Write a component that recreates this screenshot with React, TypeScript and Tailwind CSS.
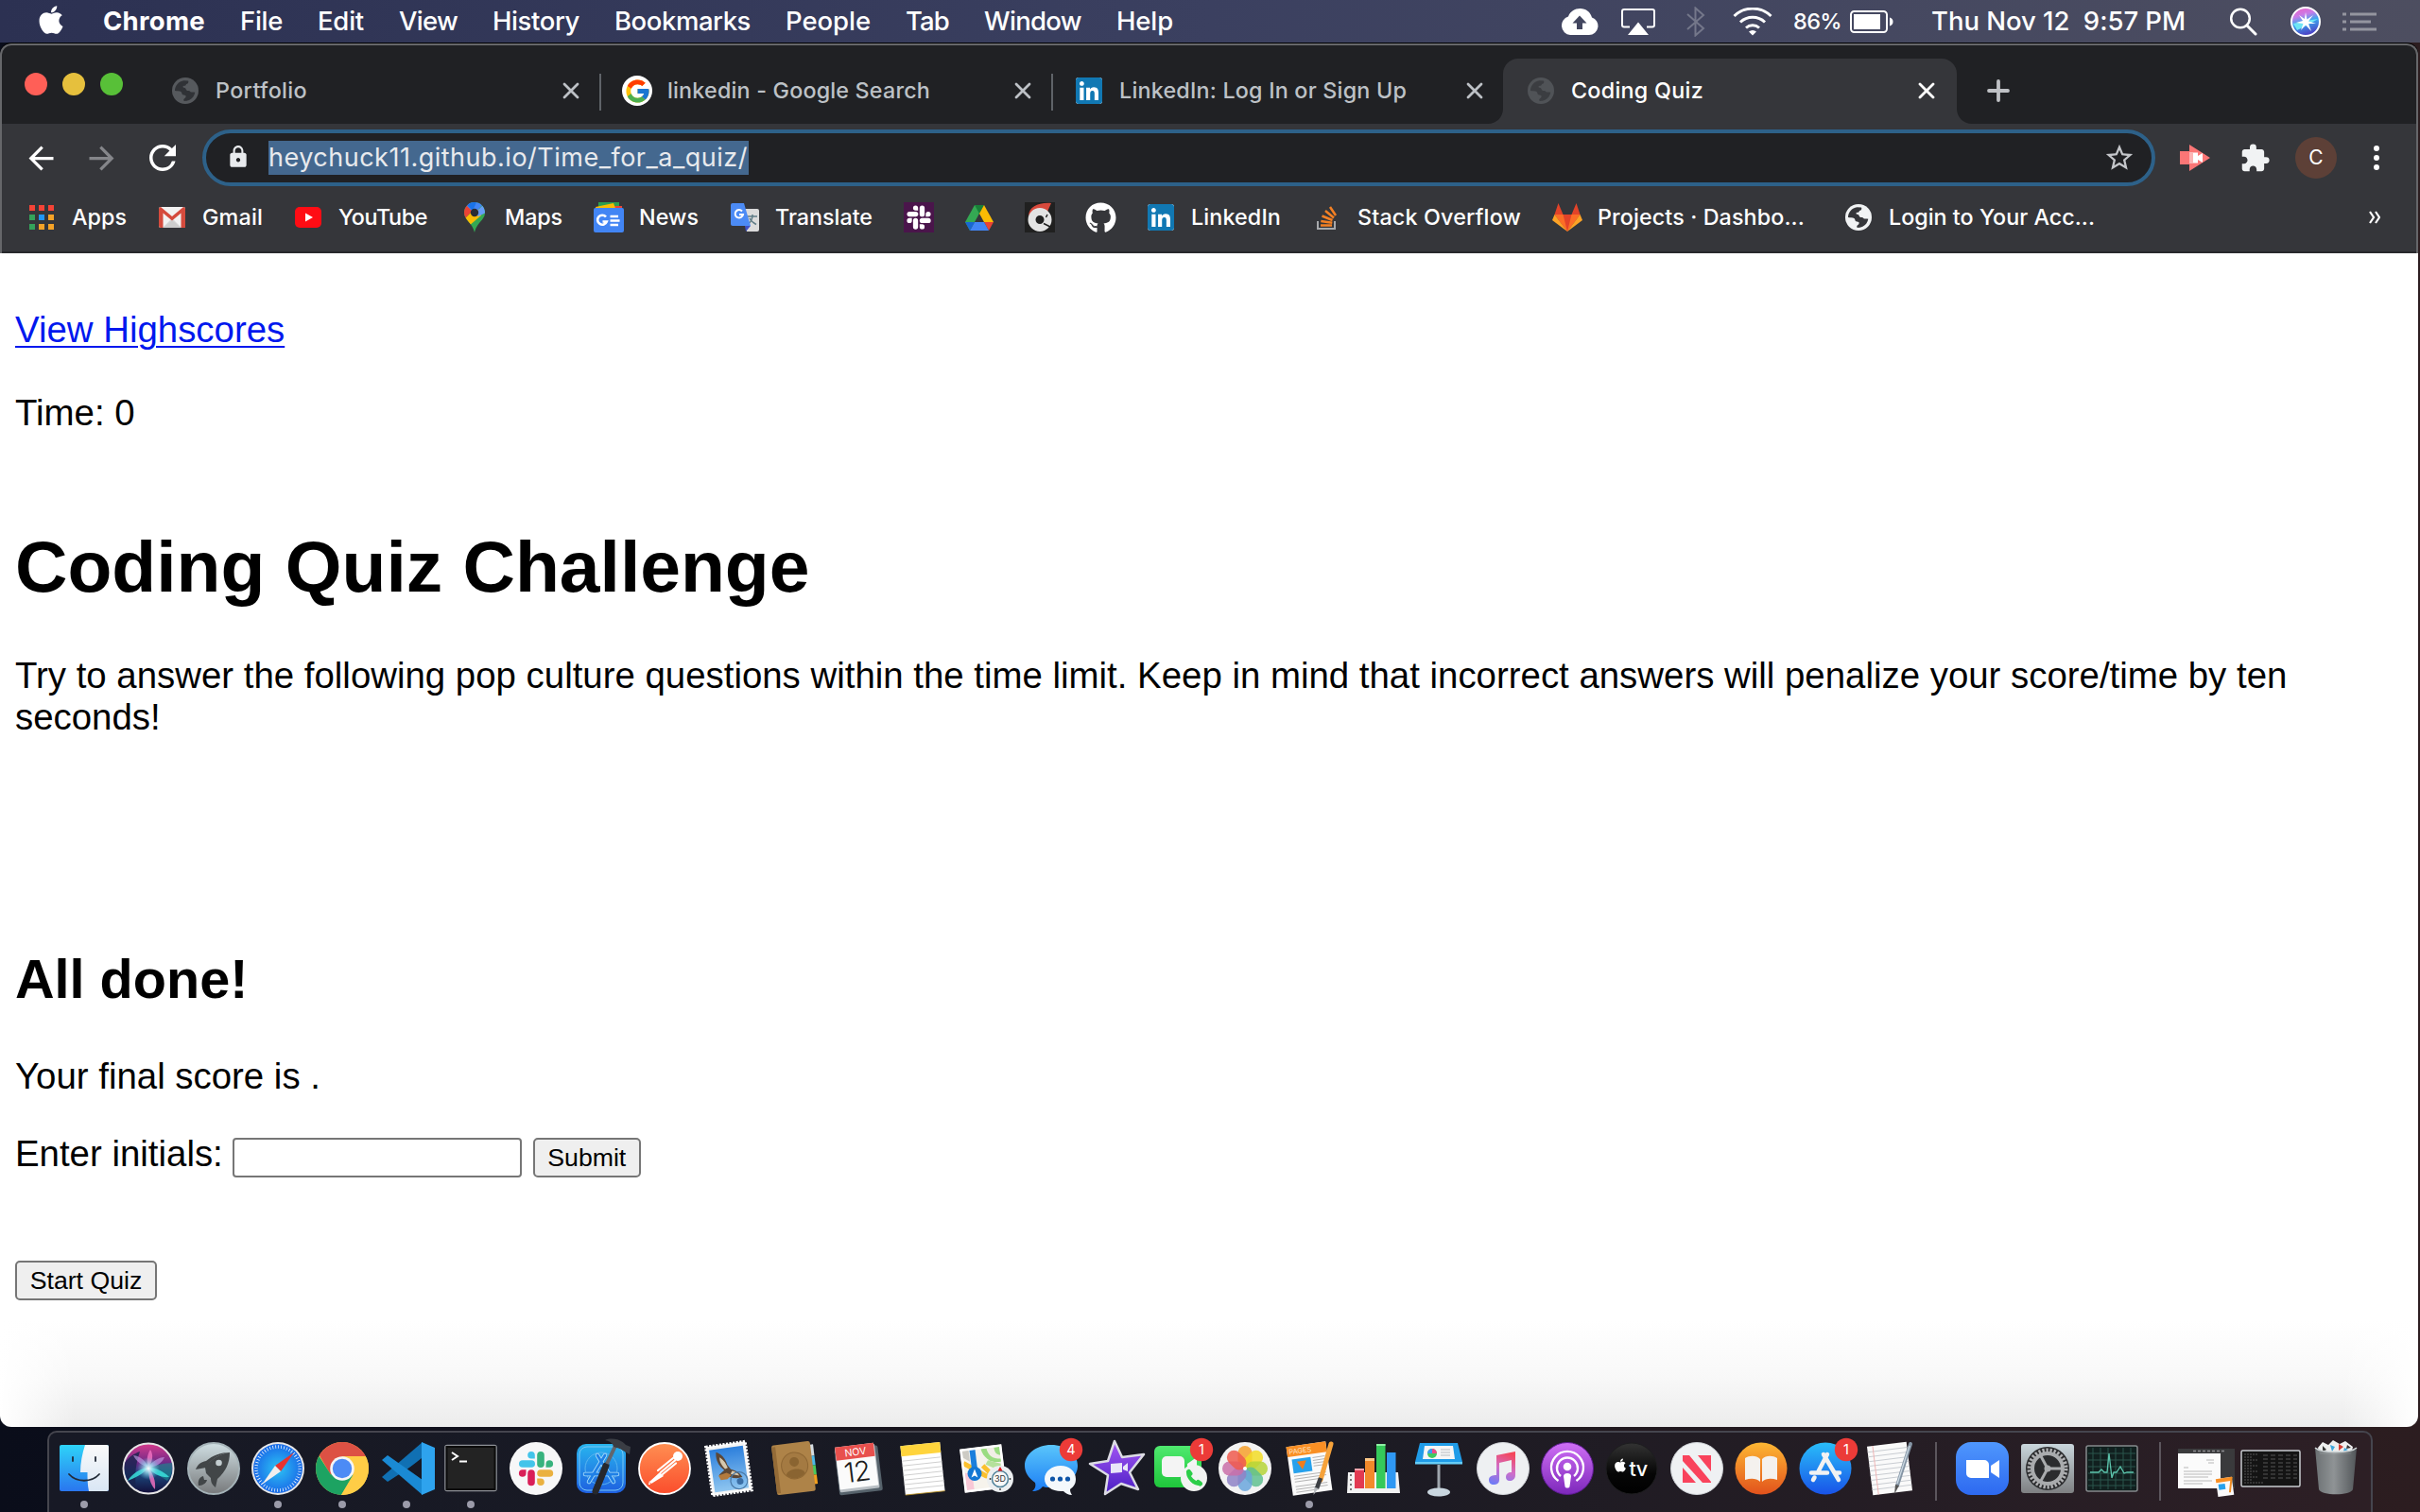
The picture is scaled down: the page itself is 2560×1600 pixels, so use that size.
import React, { useLayoutEffect, useRef, useState } from "react";
import { FaApple, FaGithub, FaLinkedin } from "react-icons/fa";
import { FcGoogle } from "react-icons/fc";
import { MdExtension, MdLock, MdStarBorder, MdArrowBack, MdArrowForward, MdRefresh } from "react-icons/md";

/** One line of text whose tracking is adjusted so that it fills `w` pixels. */
function Fit({ w, children, className = "" }: { w: number; children: string; className?: string }) {
  const ref = useRef<HTMLSpanElement>(null);
  const [ls, setLs] = useState(0);
  useLayoutEffect(() => {
    if (!ref.current) return;
    const natural = ref.current.getBoundingClientRect().width;
    setLs((w - natural) / children.length);
  }, [w, children]);
  return (
    <span ref={ref} className={`inline-block shrink-0 whitespace-pre ${className}`} style={{ letterSpacing: ls }}>
      {children}
    </span>
  );
}

function Globe({ className = "", fg, bg }: { className?: string; fg: string; bg: string }) {
  return (
    <svg viewBox="0 0 28 28" className={className}>
      <circle cx="14" cy="14" r="14" fill={fg} />
      <path
        fill={bg}
        d="M3 14c0-5.500 4-10 9.500-10.800L17 3.400c.6.900.4 2.400-.6 3-1 .5-1.600.6-1.800 1.600-.2 1.100-1.600.7-2.600 1-1 .4-.5 1.800.5 1.800 1.800 0 2 1 2.300 2 .4 1.100 1.500 1.400 2.700 1.300 1.700-.1 1.500 1.500 3 1.400 1.500 0 2.300-.3 3.800.3-.5 3.500-3 6.800-6.300 8.200-1.800.7-4.600 1.200-5.400.8-.7-.6-.3-2 .5-2.500 1-.5 1.600-1.300 1.500-2.500 0-1.300-2.100-.9-3.200-1.500-1.200-.7-.8-2.700-2-3.400C8 14.200 5 14.700 3 14z"
      />
    </svg>
  );
}

function SlackMark({ c1, c2, c3, c4 }: { c1: string; c2: string; c3: string; c4: string }) {
  return (
    <>
      <g fill={c1}>
        <rect x="-18" y="-8.800" width="17" height="7.600" rx="3.800" />
        <path d="M-1.200-10.500h-3.800a3.800 3.800 0 1 1 3.800-3.800z" />
      </g>
      <g fill={c2}>
        <rect x="1.200" y="-18" width="7.600" height="17" rx="3.800" />
        <path d="M10.500-1.200v-3.800a3.800 3.800 0 1 1 3.800 3.800z" />
      </g>
      <g fill={c3}>
        <rect x="1.200" y="1.200" width="17" height="7.600" rx="3.800" />
        <path d="M1.200 10.500h3.800a3.800 3.800 0 1 1-3.800 3.800z" />
      </g>
      <g fill={c4}>
        <rect x="-8.800" y="1.200" width="7.600" height="17" rx="3.800" />
        <path d="M-10.500 1.200v3.800a3.800 3.800 0 1 1-3.800-3.800z" />
      </g>
    </>
  );
}

/* ---------- menu bar ---------- */

const menus: [string, number][] = [
  ["File", 45],
  ["Edit", 49],
  ["View", 62],
  ["History", 92],
  ["Bookmarks", 144],
  ["People", 90],
  ["Tab", 46],
  ["Window", 103],
  ["Help", 60],
];

function MenuBar() {
  return (
    <div className="flex h-[45px] shrink-0 items-center bg-linear-to-r from-[#2c3152] via-[#3b4060] to-[#4d4e60] text-[27.500px] leading-none font-medium text-white">
      <FaApple className="ml-[37px] mb-1 size-[34px] shrink-0" />
      <div className="ml-[38px] flex gap-[37px]">
        <Fit w={108} className="font-bold">Chrome</Fit>
        {menus.map(([m, w]) => (
          <div key={m} className="flex shrink-0">
            <Fit w={w}>{m}</Fit>
          </div>
        ))}
      </div>
      <div className="ml-auto flex items-center">
        <svg viewBox="0 0 40 28" className="h-[28px] w-[40px]">
          <path fill="#fff" d="M10 28a10 10 0 0 1-2-19.500C10 3 15 0 20.500 0c6.500 0 11 4 12.500 9.500A9.500 9.500 0 0 1 30 28z" />
          <path fill="#42465f" d="M20 7.500l7.500 8h-4.500v6.500h-6v-6.500h-4.500z" />
        </svg>
        <svg viewBox="0 0 36 28" className="ml-6 h-[28px] w-[36px]">
          <path fill="none" stroke="#fff" strokeWidth="2" d="M9 19.500H3a2 2 0 0 1-2-2V3a2 2 0 0 1 2-2h30a2 2 0 0 1 2 2v14.500a2 2 0 0 1-2 2h-6" />
          <path fill="#fff" d="M18 14.500L29 28H7z" />
        </svg>
        <svg viewBox="0 0 20 32" className="ml-[33px] h-[32px] w-[20px]">
          <path fill="none" stroke="#74778a" strokeWidth="2" d="M1 8l17 15-8.500 7.500V1.500L18 9 1 24" />
        </svg>
        <svg viewBox="0 0 42 30" className="ml-[29px] h-[30px] w-[42px]">
          <g fill="none" stroke="#fff" strokeWidth="3">
            <path d="M1.500 9a28 28 0 0 1 39 0" />
            <path d="M8 15.500a19 19 0 0 1 26 0" />
            <path d="M14 21.500a10.500 10.500 0 0 1 14 0" />
          </g>
          <path fill="#fff" d="M17 25.500a6 6 0 0 1 8 0l-4 4z" />
        </svg>
        <div className="ml-[22px] w-[60px] text-[23.500px]">
          <Fit w={51}>86%</Fit>
        </div>
        <svg viewBox="0 0 46 24" className="h-[24px] w-[46px]">
          <rect x="1" y="1" width="38" height="22" rx="3.500" fill="none" stroke="#fff" strokeWidth="2" />
          <rect x="4" y="4" width="28" height="16" fill="#fff" />
          <path fill="#fff" d="M42 7.500c2.500.5 3.500 2.500 3.500 4.500s-1 4-3.500 4.500z" />
        </svg>
        <div className="ml-[40px] w-[270px]">
          <Fit w={269}>Thu Nov 12  9:57 PM</Fit>
        </div>
        <svg viewBox="0 0 30 30" className="ml-[45px] h-[30px] w-[30px]">
          <circle cx="12" cy="11.500" r="9.800" fill="none" stroke="#fff" strokeWidth="2.500" />
          <path stroke="#fff" strokeWidth="3" strokeLinecap="round" d="M19 19l9 9" />
        </svg>
        <svg viewBox="-17 -17 34 34" className="ml-[34px] h-[34px] w-[34px]">
          <defs>
            <linearGradient id="siriMini" x1="0" y1="0" x2="0.300" y2="1">
              <stop offset="0" stopColor="#f65cc0" />
              <stop offset=".35" stopColor="#c77be8" />
              <stop offset=".6" stopColor="#3aa7ee" />
              <stop offset="1" stopColor="#4b48c8" />
            </linearGradient>
          </defs>
          <circle r="15" fill="url(#siriMini)" stroke="#fff" strokeWidth="2" />
          <path fill="#6fe6f5" d="M0-1L13-3 3 3-9 9-13 2z" />
          <path fill="#fff" d="M0-10l1.500 7.500L8-7 3-.5 11 2 3 2 6 10 0 3.500-5 9-2.500 2-10 1-3-1-7-7-1.200-3z" />
        </svg>
        <svg viewBox="0 0 36 20" className="mr-[46px] ml-[22px] h-[20px] w-[36px]">
          <path stroke="#94959f" strokeWidth="3" d="M0 2h4M8 2h28M0 10h4M8 10h22M0 18h4M8 18h28" />
        </svg>
      </div>
    </div>
  );
}

/* ---------- browser chrome ---------- */

function CloseX({ color }: { color: string }) {
  return (
    <svg viewBox="0 0 18 18" className="size-[18px] shrink-0">
      <path stroke={color} strokeWidth="2.800" strokeLinecap="round" d="M2 2l14 14M16 2L2 16" />
    </svg>
  );
}

function LinkedInIcon() {
  return (
    <div className="flex size-7 items-center justify-center overflow-hidden rounded-[3px] bg-white">
      <FaLinkedin className="size-[32px] shrink-0 text-[#1178b3]" />
    </div>
  );
}

function TabStrip() {
  return (
    <div className="flex h-[83px] shrink-0 text-[23.300px] font-[450] text-[#bdc1c6]">
      <div className="flex w-[170px] shrink-0 gap-4 pt-[29px] pl-[24px]">
        <div className="size-6 rounded-full bg-[#ff5f57]" />
        <div className="size-6 rounded-full bg-[#e6c03d]" />
        <div className="size-6 rounded-full bg-[#58c038]" />
      </div>
      <div className="mt-[14px] flex h-[68px] w-[462px] shrink-0 items-center pl-[10px]">
        <Globe className="size-7" fg="#56595d" bg="#303236" />
        <div className="ml-[18px] w-[367px]">
          <Fit w={97}>Portfolio</Fit>
        </div>
        <CloseX color="#bdc1c6" />
      </div>
      <div className="mt-[30px] h-[39px] w-[2px] shrink-0 bg-[#5f6368]" />
      <div className="mt-[14px] flex h-[68px] w-[476px] shrink-0 items-center pl-[22px]">
        <div className="flex size-8 items-center justify-center rounded-full bg-white">
          <FcGoogle className="size-[29px]" />
        </div>
        <div className="ml-[16px] w-[367px]">
          <Fit w={278}>linkedin - Google Search</Fit>
        </div>
        <CloseX color="#bdc1c6" />
      </div>
      <div className="mt-[30px] h-[39px] w-[2px] shrink-0 bg-[#5f6368]" />
      <div className="mt-[14px] flex h-[68px] w-[460px] shrink-0 items-center pl-[24px]">
        <LinkedInIcon />
        <div className="ml-[18px] w-[367px]">
          <Fit w={304}>LinkedIn: Log In or Sign Up</Fit>
        </div>
        <CloseX color="#bdc1c6" />
      </div>
      <div className="mt-[14px] flex shrink-0 text-white">
        <svg viewBox="0 0 16 16" className="size-4 self-end">
          <path fill="#35363a" d="M16 0v16H0C9 16 16 9 16 0z" />
        </svg>
        <div className="flex h-[69px] w-[480px] items-center rounded-t-[16px] bg-[#35363a] pb-px pl-[26px]">
          <Globe className="size-7" fg="#505357" bg="#3b3d41" />
          <div className="ml-[18px] w-[367px]">
            <Fit w={140}>Coding Quiz</Fit>
          </div>
          <CloseX color="#ffffff" />
        </div>
        <svg viewBox="0 0 16 16" className="size-4 self-end">
          <path fill="#35363a" d="M0 0v16h16C7 16 0 9 0 0z" />
        </svg>
      </div>
      <svg viewBox="0 0 24 24" className="mt-[36px] ml-[16px] size-6">
        <path stroke="#bfc1c5" strokeWidth="3.800" strokeLinecap="round" d="M12 2v20M2 12h20" />
      </svg>
    </div>
  );
}

function Toolbar() {
  return (
    <div className="flex h-[72px] shrink-0 items-center bg-[#35363a]">
      <MdArrowBack className="ml-[22px] size-[39px] shrink-0 text-white" />
      <MdArrowForward className="ml-[25px] size-[39px] shrink-0 text-[#85868a]" />
      <MdRefresh className="ml-[24px] size-[42px] shrink-0 text-white" />
      <div className="ml-[21px] flex h-[60px] w-[2066px] shrink-0 items-center rounded-full border-4 border-[#2d6189] bg-[#202124]">
        <MdLock className="ml-[21px] mb-[2px] size-[26px] shrink-0 text-[#e8eaed]" />
        <div className="ml-[19px] h-[36px] w-[508px] bg-[#44688f] text-[27px] leading-[35px] text-[#e8eaed]">
          <Fit w={507}>heychuck11.github.io/Time_for_a_quiz/</Fit>
        </div>
        <MdStarBorder className="mr-[17px] ml-auto size-[34px] text-[#c4c6ca]" />
      </div>
      <svg viewBox="0 0 32 28" className="ml-[26px] h-[28px] w-[32px] shrink-0">
        <path fill="#fb7676" d="M0 7h10V0l22 14-22 14v-7H0z" />
        <path fill="#fff" d="M10 8.500h9v3.500l5-3v10l-5-3v3.500h-9z" />
        <path fill="#fcb5b5" d="M10 8.500h4v11h-4z" />
      </svg>
      <MdExtension className="ml-[31px] size-[33px] shrink-0 text-[#f1f3f4]" />
      <div className="ml-[26px] flex size-11 shrink-0 items-center justify-center rounded-full bg-[#5d4037] text-[21px] text-white">C</div>
      <svg viewBox="0 0 6 26" className="ml-[39px] h-[26px] w-[6px] shrink-0">
        <circle cx="3" cy="3" r="3" fill="#fff" />
        <circle cx="3" cy="13" r="3" fill="#fff" />
        <circle cx="3" cy="23" r="3" fill="#fff" />
      </svg>
    </div>
  );
}

function Bookmark({ slot, icon, label, w = 0 }: { slot: string; icon: React.ReactNode; label?: string; w?: number }) {
  return (
    <div className={`flex shrink-0 items-center ${slot}`}>
      <div className="flex w-8 shrink-0 items-center justify-center">{icon}</div>
      {label && (
        <div className="ml-4 flex">
          <Fit w={w}>{label}</Fit>
        </div>
      )}
    </div>
  );
}

function BookmarksBar() {
  const dots = ["#f44336", "#f44336", "#f44336", "#34a35a", "#2196f3", "#f5a327", "#34a35a", "#f5a327", "#f5a327"];
  return (
    <div className="flex h-[65px] shrink-0 items-center border-b-2 border-[#28292c] bg-[#35363a] pb-[9px] pl-[26px] text-[23.300px] font-[450] text-white">
      <Bookmark
        slot="w-[138px]"
        label="Apps"
        w={58}
        icon={
          <div className="grid grid-cols-3 gap-1">
            {dots.map((c, i) => (
              <div key={i} className="size-[6px]" style={{ backgroundColor: c }} />
            ))}
          </div>
        }
      />
      <Bookmark
        slot="w-[144px]"
        label="Gmail"
        w={64}
        icon={
          <svg viewBox="0 0 28 22" className="h-[22px] w-7">
            <rect width="28" height="22" rx="2" fill="#f2f2f2" />
            <path fill="#d5d5d5" d="M4 22L14 12l10 10z" />
            <path fill="#c5c5c5" d="M4.500 22L14 14.500 23.500 22z" opacity=".5" />
            <path fill="#d54b3d" d="M0 2C0 1 1 0 2 0l12 10L26 0c1 0 2 1 2 2v20h-4.500V6.500L14 14.500 4.500 6.500V22H2a2 2 0 0 1-2-2z" />
          </svg>
        }
      />
      <Bookmark
        slot="w-[176px]"
        label="YouTube"
        w={94}
        icon={
          <svg viewBox="0 0 28 22" className="h-[22px] w-7">
            <rect width="28" height="22" rx="5" fill="#ff0c14" />
            <path fill="#fff" d="M11 6.500l8 4.500-8 4.500z" />
          </svg>
        }
      />
      <Bookmark
        slot="w-[142px]"
        label="Maps"
        w={61}
        icon={
          <svg viewBox="0 0 22 32" className="h-8 w-[22px]">
            <clipPath id="pin">
              <path d="M11 0a11 11 0 0 1 11 11c0 8-8.500 10-11 21C8.500 21 0 19 0 11A11 11 0 0 1 11 0z" />
            </clipPath>
            <g clipPath="url(#pin)">
              <rect width="22" height="32" fill="#34a853" />
              <path fill="#fbbc04" d="M0 18L14 4l4 10L5 25z" />
              <path fill="#ea4335" d="M0 0v18L12 6 4 0z" />
              <path fill="#4285f4" d="M3 4l8 8L22 0H6z" />
              <path fill="#669df6" d="M11 12l9-9 3 8-8 4z" />
              <path fill="#1a73e8" d="M3 3l6 6 4-9H6z" />
            </g>
            <circle cx="11" cy="11" r="4.200" fill="#2b2d33" />
          </svg>
        }
      />
      <Bookmark
        slot="w-[144px]"
        label="News"
        w={63}
        icon={
          <svg viewBox="0 0 32 32" className="size-8">
            <path fill="#2e9e4f" d="M5 0h22v8H5z" />
            <path fill="#ea4335" d="M14 4h16v6H14z" />
            <path fill="#fbbc04" d="M2 5l19-4 3 8H3z" />
            <rect y="6" width="32" height="26" rx="2" fill="#4285f4" />
            <path fill="none" stroke="#fff" strokeWidth="2.600" d="M13 15.500a5 5 0 1 0 .8 5H9.500M17.500 15h8.500M17.500 19.500h10M17.500 24h8.500" />
          </svg>
        }
      />
      <Bookmark
        slot="w-[184px]"
        label="Translate"
        w={103}
        icon={
          <svg viewBox="0 0 30 30" className="size-[30px]">
            <path fill="#dcdcdc" d="M12 6h16a2 2 0 0 1 2 2v20a2 2 0 0 1-2 2H17z" />
            <path fill="none" stroke="#5f7c86" strokeWidth="1.500" d="M18 14h10M23 12v2c-.5 4-2 6-4.500 8M20 16c1.500 3 4 5 7 6.500" />
            <path fill="#3f51c5" d="M15 24h6l-5 6z" />
            <path fill="#4c8bf5" d="M2 0h12l7 24H2a2 2 0 0 1-2-2V2a2 2 0 0 1 2-2z" />
            <path fill="none" stroke="#fff" strokeWidth="2" d="M12 8.500a4.200 4.200 0 1 0 1 3.500H9" />
          </svg>
        }
      />
      <Bookmark
        slot="w-[64px]"
        icon={
          <svg viewBox="-23 -23 46 46" className="size-8">
            <rect x="-23" y="-23" width="46" height="46" fill="#4a154b" />
            <SlackMark c1="#fff" c2="#fff" c3="#fff" c4="#fff" />
          </svg>
        }
      />
      <Bookmark
        slot="w-[64px]"
        icon={
          <svg viewBox="0 0 30 27" className="h-[27px] w-[30px]">
            <path fill="#34a853" d="M10 0h2l3.500 8L5 27 0 18z" />
            <path fill="#188038" d="M10 0h10l-5 9z" />
            <path fill="#fbbc04" d="M20 0l10 18H20L15 9z" />
            <path fill="#ea4335" d="M20 18h10l-5 9z" />
            <path fill="#4285f4" d="M10 18h10l5 9H5z" />
            <path fill="#1967d2" d="M0 18h10l-5 9z" />
          </svg>
        }
      />
      <Bookmark
        slot="w-[64px]"
        icon={
          <svg viewBox="0 0 32 32" className="size-8">
            <rect width="32" height="32" fill="#202020" />
            <path fill="#d8493c" d="M4 14C5 5 14 0 28 1l-4 9C16 6 9 9 4 14z" />
            <circle cx="16" cy="18.500" r="8.500" fill="none" stroke="#e3e3e3" strokeWidth="8" />
            <path stroke="#202020" strokeWidth="1.500" d="M20 22.500l8 4M24 13l-1.500 3" />
          </svg>
        }
      />
      <Bookmark slot="w-[64px]" icon={<FaGithub className="size-[33px] shrink-0 text-white" />} />
      <Bookmark slot="w-[176px]" label="LinkedIn" w={95} icon={<LinkedInIcon />} />
      <Bookmark
        slot="w-[254px]"
        label="Stack Overflow"
        w={173}
        icon={
          <svg viewBox="0 0 24 28" className="h-[28px] w-6">
            <path fill="none" stroke="#a7a9ac" strokeWidth="2" d="M2 18v8h18v-8" />
            <g stroke="#f48024" strokeWidth="2.500">
              <path d="M5 22.500h12M5.300 18l12 1.800M6.500 12.500l11 4.500M10 7l9 7.500M15 3l6 9" />
            </g>
          </svg>
        }
      />
      <Bookmark
        slot="w-[308px]"
        label="Projects · Dashbo..."
        w={219}
        icon={
          <svg viewBox="0 0 32 30" className="h-[30px] w-8">
            <path fill="#e24329" d="M6.500 0l5 12h9l5-12L29.500 12 16 30 2.500 12z" />
            <path fill="#fc6d26" d="M2.500 12h9L16 30zM29.500 12h-9L16 30z" />
            <path fill="#fca326" d="M2.500 12L0 18l16 12zM29.500 12L32 18 16 30z" />
          </svg>
        }
      />
      <Bookmark slot="w-[400px]" label="Login to Your Acc..." w={218} icon={<Globe className="size-7" fg="#f1f3f4" bg="#35363a" />} />
      <svg viewBox="0 0 12 14" className="mr-[38px] ml-auto h-[14px] w-3">
        <path fill="none" stroke="#fff" strokeWidth="2.200" d="M1 1l4 6-4 6M7 1l4 6-4 6" />
      </svg>
    </div>
  );
}

/* ---------- page ---------- */

function QuizPage() {
  return (
    <main className="flex h-[1242px] flex-col overflow-hidden rounded-b-[12px] bg-[linear-gradient(to_right,#fff,rgba(255,255,255,0)_80px,rgba(255,255,255,0)_calc(100%-80px),#fff),linear-gradient(to_bottom,#fff_1130px,#f8f8f8_1190px,#ececec)] px-4 pt-[59px] font-['Liberation_Sans',Arial,sans-serif] text-[38.400px] leading-[44px] text-black">
      <a className="self-start text-[#0018ee] underline decoration-2 underline-offset-[4px]">View Highscores</a>
      <p className="mt-[44px]">Time: 0</p>
      <h1 className="mt-[96px] text-[76.800px] leading-[88px] font-bold">Coding Quiz Challenge</h1>
      <p className="mt-[50px]">
        Try to answer the following pop culture questions within the time limit. Keep in mind that incorrect answers will
        penalize your score/time by ten seconds!
      </p>
      <h2 className="mt-[222px] text-[57.600px] leading-[66px] font-bold">All done!</h2>
      <p className="mt-[48px]">Your final score is .</p>
      <div className="mt-[38px] flex items-start">
        <label>Enter initials:</label>
        <input className="mt-[5px] ml-[10px] h-[42px] w-[306px] rounded-[4px] border-2 border-[#767676] bg-white" />
        <button className="mt-[5px] ml-3 h-[42px] w-[114px] rounded-[5px] border-2 border-[#767676] bg-[#efefef] text-[26.670px] leading-[38px]">
          Submit
        </button>
      </div>
      <button className="mt-[88px] h-[42px] w-[150px] self-start rounded-[5px] border-2 border-[#767676] bg-[#efefef] text-[26.670px] leading-[38px] whitespace-nowrap">
        Start Quiz
      </button>
    </main>
  );
}

/* ---------- dock icons: drawn around the centre of a 68 × 68 cell ---------- */

const Finder = () => (
  <>
    <defs>
      <linearGradient id="fnA" x1="0" y1="0" x2="0" y2="1"><stop offset="0" stopColor="#2ed3f8" /><stop offset="1" stopColor="#2a76ef" /></linearGradient>
      <linearGradient id="fnB" x1="0" y1="0" x2="0" y2="1"><stop offset="0" stopColor="#fafafa" /><stop offset="1" stopColor="#d9e6f5" /></linearGradient>
    </defs>
    <rect x="-26" y="-25" width="52" height="49" rx="2" fill="url(#fnA)" />
    <path fill="url(#fnB)" d="M1-25h23a2 2 0 0 1 2 2v45a2 2 0 0 1-2 2H5C3.500 17 3.500 10 3.500 4H-4C-4-6-2-16 1-25z" />
    <path fill="none" stroke="#222b38" strokeWidth="1.800" strokeLinecap="round" d="M-12-12v4M12-12v4M-16 6c8 9 24 9 32 0" />
  </>
);

const Siri = () => (
  <>
    <defs>
      <linearGradient id="siA" x1="0" y1="0" x2="0" y2="1"><stop offset="0" stopColor="#d83a8c" /><stop offset=".4" stopColor="#6a2a88" /><stop offset=".6" stopColor="#1c4a80" /><stop offset="1" stopColor="#130c38" /></linearGradient>
      <radialGradient id="siB"><stop offset="0" stopColor="#fff" /><stop offset=".35" stopColor="#a8e8f4" stopOpacity=".8" /><stop offset="1" stopColor="#60c0e0" stopOpacity="0" /></radialGradient>
    </defs>
    <circle r="26.500" fill="url(#siA)" stroke="#e6e6e6" strokeWidth="2" />
    <path fill="#18234e" opacity=".8" d="M-25-6c4-6 10-10 16-12-4 12-6 24-4 40-8-6-14-16-12-28z" />
    <path fill="#1c8a8e" opacity=".6" d="M25-6c-8 0-18 3-25 5 7 6 14 10 20 14 4-5 6-12 5-19z" />
    <path fill="#3ae0dc" opacity=".85" d="M0-1C-6 6-14 10-22 13c6-9 14-13 22-14zM0-1C8-1 16 3 22 9 14 10 5 6 0-1z" />
    <path fill="#f070c0" opacity=".85" d="M0-1c5 7 8 14 7 23C2 17 0 8 0-1zM0-1C-2-8-2-13 2-20c4 6 2 13-2 19z" />
    <path fill="#c9a6ee" opacity=".6" d="M0-1c-8-3-13-7-16-13C-8-13-3-8 0-1zM0-1C4-8 11-12 17-12 14-5 8-2 0-1z" />
    <circle r="12" fill="url(#siB)" />
  </>
);

const Launchpad = () => (
  <>
    <defs><linearGradient id="lpA" x1="0" y1="0" x2="0" y2="1"><stop offset="0" stopColor="#d0dfe3" /><stop offset="1" stopColor="#77797b" /></linearGradient></defs>
    <circle r="27" fill="url(#lpA)" stroke="#a5b3b8" strokeWidth="2" />
    <g fill="#424648">
      <path d="M17-17C7-16-3-10-8-1l-11 2c2-5 5-8 11-9C-1-14 8-17 17-17z" />
      <path d="M17-17C17-6 13 3 4 11L2 20c-4-3-5-6-5-10l-5-5-1-6C-3-10 7-16 17-17z" />
      <path d="M-11 8c-4 1-6 5-5 10 4 0 8-2 9-6l-3 0z" />
    </g>
    <circle cx="5.500" cy="-6" r="3.300" fill="#c3cdd0" />
  </>
);

const Safari = () => (
  <>
    <defs><radialGradient id="sfA"><stop offset="0" stopColor="#2cc3f4" /><stop offset="1" stopColor="#1a6be8" /></radialGradient></defs>
    <circle r="28" fill="#e7e7e7" />
    <circle r="26" fill="url(#sfA)" />
    <circle r="23" fill="none" stroke="#fff" strokeWidth="3.500" strokeDasharray=".7 2.300" />
    <path fill="#e8332f" d="M17-17L-3-3l6 6z" />
    <path fill="#f1efee" d="M-17 17L-3-3l6 6z" />
  </>
);

const Chrome = () => (
  <>
    <circle r="28" fill="#ffcd46" />
    <path fill="#dd5144" d="M-24.200-14A28 28 0 0 1 24.800-13H0L-12 7z" />
    <path fill="#1da362" d="M-24.600-13.300A28 28 0 0 0-1 28L12 7 0 0-12 6.500z" />
    <path fill="#ffcd46" d="M24.800-13A28 28 0 0 1-1 28L11.500 6.500 9-13z" />
    <circle r="12.800" fill="#f5f5f5" />
    <circle r="10.200" fill="#4c8bf5" />
  </>
);

const VSCode = () => (
  <g transform="translate(2 0)">
    <path fill="#1070b3" d="M-28 9l6 5L15-10V-28L-28 9z" />
    <path fill="#1a8ad4" d="M-28-9l6-5L15 12v16L-28-9z" />
    <path fill="#2ea3ee" d="M14-28l14 6v44l-14 6z" />
    <path fill="#171824" d="M14-11v22L0 0z" />
  </g>
);

const Terminal = () => (
  <>
    <rect x="-27" y="-24.500" width="54" height="48" rx="2" fill="#232323" stroke="#8d9096" strokeWidth="1.600" />
    <rect x="-25.500" y="-23" width="51" height="45" fill="none" stroke="#0c0c0c" strokeWidth="2" />
    <path fill="none" stroke="#fff" strokeWidth="2" d="M-20-17l6 4-6 4M-12-7.500h8" />
  </>
);

const Slack = () => (
  <>
    <circle r="28" fill="#f7f7f8" />
    <SlackMark c1="#43c4ea" c2="#38b37e" c3="#eab140" c4="#d91f58" />
  </>
);

const Xcode = () => (
  <>
    <defs><linearGradient id="xcA" x1="0" y1="0" x2="0" y2="1"><stop offset="0" stopColor="#28b5ee" /><stop offset="1" stopColor="#1e5fe0" /></linearGradient></defs>
    <g transform="translate(1 0)">
      <rect x="-26" y="-26" width="52" height="52" rx="10" fill="url(#xcA)" />
      <rect x="-23" y="-23" width="46" height="46" rx="8" fill="none" stroke="#78c8f5" strokeWidth="1" />
      <circle r="17" fill="none" stroke="#5ab4f0" strokeWidth="1" />
      <path fill="none" stroke="#a8dcfa" strokeWidth="4.500" strokeLinecap="round" d="M-13 14L4-14M13 14L-4-14M-17 6h34" />
      <path fill="none" stroke="#1f80e6" strokeWidth="2.800" strokeLinecap="round" d="M-13 14L4-14M13 14L-4-14M-17 6h34" />
      <path stroke="#26282d" strokeWidth="7" strokeLinecap="round" d="M-6 24L5-3" />
      <path stroke="#63666d" strokeWidth="4" d="M6-5l9-19" />
      <path fill="#3a3d44" d="M4-30c7-3 17-1 22 5l5 2-1 8-7-4c-4-3-7-3-10-4-1-4-4-6-9-7z" />
    </g>
  </>
);

const Postman = () => (
  <>
    <defs><linearGradient id="pmA" x1="0" y1="0" x2="0" y2="1"><stop offset="0" stopColor="#ff8f52" /><stop offset="1" stopColor="#fb4d2c" /></linearGradient></defs>
    <circle r="27" fill="url(#pmA)" stroke="#fff" strokeWidth="1.800" />
    <circle cx="14" cy="-13" r="5" fill="#fff" />
    <path stroke="#fff" strokeWidth="2.200" strokeLinecap="round" d="M9-11L-7 2M11-8.500L-4 4M12-5.500L-2 6" />
    <path fill="#fff" d="M-5 4l-11 10 2 2L-1 8zM-16 13l1 4-2 0z" />
  </>
);

const Mail = () => (
  <g transform="rotate(-8)">
    <rect x="-21" y="-26" width="42" height="52" fill="#f4f4f4" stroke="#fff" strokeWidth="3" strokeDasharray="2.200 1.400" />
    <defs><linearGradient id="mlA" x1="0" y1="0" x2="0" y2="1"><stop offset="0" stopColor="#2c7fdc" /><stop offset="1" stopColor="#8fc6f0" /></linearGradient></defs>
    <rect x="-18" y="-22" width="36" height="45" fill="url(#mlA)" />
    <path fill="#5c4736" d="M-11-19c6 3 9 9 10 15l3 5c5 2 9 5 11 10-5 1-9 0-13-2l-8 0-3-4 6-4c-5-5-8-12-6-20z" />
    <path fill="#d5c8ae" d="M-8-13c4 3 6 8 7 12l-3 1c-3-4-5-9-4-13zM3 3c3 1 6 3 7 6l-9-3z" />
    <path fill="#b37a3d" d="M-12 6l9-2 5 3-5 4-7 0z" />
    <circle cx="9" cy="14" r="9" fill="none" stroke="#4a7aa8" strokeWidth="1.200" />
    <circle cx="10" cy="15" r="3.500" fill="#3b6ea5" />
  </g>
);

const Contacts = () => (
  <g transform="rotate(-7)">
    <path fill="#d5dde2" d="M18-23h5v12h-5z" />
    <path fill="#4cb9e8" d="M18-11h5v10h-5z" />
    <path fill="#4bc95c" d="M18-1h5v10h-5z" />
    <path fill="#f2a01e" d="M18 9h5v10h-5z" />
    <rect x="-21" y="-27" width="41" height="53" rx="2.500" fill="#ae8348" />
    <path fill="#946b37" d="M-21-25h4v49h-4z" />
    <circle cx="1" cy="-3" r="14" fill="#a47a42" stroke="#8d6633" strokeWidth="1" />
    <circle cx="1" cy="-7" r="5" fill="#8a6431" />
    <path fill="#8a6431" d="M-9 6c2-7 18-7 20 0-5 6-15 6-20 0z" />
  </g>
);

const Calendar = () => (
  <g transform="translate(-1 0) rotate(-7)">
    <rect x="-22" y="-22" width="46" height="48" rx="2" fill="#56626b" />
    <rect x="-21" y="-24" width="42" height="47" rx="1.500" fill="#b9bfc4" />
    <rect x="-21" y="-25" width="41" height="45" fill="#fbfbfb" />
    <path fill="#e8504d" d="M-21-25h41v14h-41z" />
    <text x="0" y="-14" textAnchor="middle" fontSize="10.500" fill="#fff" fontFamily="Inter, sans-serif">NOV</text>
    <text x="-1" y="13.500" textAnchor="middle" fontSize="29" fontWeight="300" letterSpacing="-1" fill="#1c1c1c" fontFamily="Inter, sans-serif">12</text>
  </g>
);

const Notes = () => (
  <g transform="rotate(-6)">
    <rect x="-21" y="-26" width="42" height="52" fill="#fff" />
    <path fill="#ffd43c" d="M-21-26h42v11h-42z" />
    <path stroke="#d0d0d0" strokeWidth="1" d="M-21-10h42M-21-5h42M-21 0h42M-21 5h42M-21 10h42M-21 15h42M-21 20h42" />
    <path stroke="#b88d1a" strokeWidth=".8" d="M-21 26h42" />
  </g>
);

const Maps = () => (
  <>
    <g transform="translate(-4 0) rotate(-7)">
      <rect x="-22" y="-23" width="44" height="46" fill="#f6f3ec" />
      <path fill="#9bdc82" d="M0-21h20v16C10-4 2-10 0-21z" />
      <path fill="#f1eee6" d="M6-21h8C14-15 16-13 20-12v4C11-9 7-13 6-21z" />
      <path fill="#cdcbc4" d="M-20-21h7v12l-7-5z" />
      <path fill="#f8c8d6" d="M-20 2l8 3v16h-8z" />
      <path fill="none" stroke="#fbc02d" strokeWidth="5" d="M-20-8L2 8l18 4M0-3l16 20" />
      <path stroke="#1b7fdc" strokeWidth="6" d="M-9-21V4" />
      <path fill="#b5e19c" d="M3-4l16 9v-8L6-8z" />
      <rect x="-21" y="-22" width="42" height="44" fill="none" stroke="#fff" strokeWidth="2.500" />
    </g>
    <circle cx="-13" cy="5.500" r="7.500" fill="#1277d4" />
    <path fill="#fff" d="M-13 .5l3.500 9-3.500-2-3.500 2z" />
    <circle cx="14" cy="11" r="14" fill="#eceff1" />
    <circle cx="14" cy="11" r="8.500" fill="#f8f8f8" stroke="#4d8099" strokeWidth="1.500" />
    <path fill="#e3191d" d="M14-2l2.500 4.500h-5z" />
    <text x="14" y="14.300" textAnchor="middle" fontSize="9" fill="#333" fontFamily="Inter, sans-serif">3D</text>
    <circle cx="3.500" cy="11" r=".9" fill="#333" />
    <circle cx="24.500" cy="11" r=".9" fill="#333" />
    <circle cx="14" cy="22" r=".9" fill="#333" />
  </>
);

const Badge = ({ x, n }: { x: number; n: string }) => (
  <>
    <circle cx={x} cy="-20" r="12.200" fill="#ec3b38" />
    <text x={x} y="-14.800" textAnchor="middle" fontSize="14.500" fill="#fff" fontFamily="Inter, sans-serif">{n}</text>
  </>
);

const Messages = () => (
  <>
    <defs><linearGradient id="msA" x1="0" y1="0" x2="0" y2="1"><stop offset="0" stopColor="#5ac6fb" /><stop offset="1" stopColor="#1c7df5" /></linearGradient></defs>
    <path fill="url(#msA)" d="M0-25c16 0 28 10 28 22S16 20-1 20c-3 0-6 0-8-1-2 3-6 5-11 5 3-3 4-5 3-9-7-5-11-11-11-18C-28-15-16-25 0-25z" />
    <path fill="#f4f8fc" d="M10-3c9 0 16 6 16 14 0 5-2 8-6 11 0 3 1 4 2 6-4 0-7-2-9-4C2 25-7 19-7 11S1-3 10-3z" />
    <circle cx="1.500" cy="11" r="2.600" fill="#0f55a8" />
    <circle cx="9.500" cy="11" r="2.600" fill="#0f55a8" />
    <circle cx="17.500" cy="11" r="2.600" fill="#0f55a8" />
    <Badge x={21} n="4" />
  </>
);

const IMovie = () => (
  <>
    <defs><linearGradient id="imA" x1="0" y1="0" x2="0" y2="1"><stop offset="0" stopColor="#a558f5" /><stop offset="1" stopColor="#4a1ec4" /></linearGradient></defs>
    <path fill="url(#imA)" stroke="#dcdce4" strokeWidth="2.500" strokeLinejoin="round" d="M-2-29l8 17 23-3L14 4l9 18-18-6-17 11 3-20-19-12 19-3z" />
    <path fill="#e9e6f8" d="M-6-5L6-6v10L-6 5zM7-2l5-4v9L7 1z" />
  </>
);

const FaceTime = () => (
  <>
    <defs><linearGradient id="ftA" x1="0" y1="0" x2="0" y2="1"><stop offset="0" stopColor="#4fe96f" /><stop offset="1" stopColor="#1fc63b" /></linearGradient></defs>
    <rect x="-28" y="-24" width="50" height="44" rx="6" fill="url(#ftA)" />
    <rect x="-20" y="-13" width="24" height="22" rx="5" fill="#f4f4f4" />
    <path fill="#f4f4f4" d="M7-5l10-7v20L7 1z" />
    <circle cx="14" cy="10" r="14" fill="#f1f3f1" />
    <path fill="none" stroke="#2bce48" strokeWidth="4" strokeLinecap="round" d="M8 4c0 6 6 12 12 12" />
    <path stroke="#2bce48" strokeWidth="5" strokeLinecap="round" d="M8.500 3.500l1.500 2M18.500 14.500l2 1.500" />
    <Badge x={22} n="1" />
  </>
);

const petals = ["#f6a02c", "#f2dc26", "#b5d437", "#5fbf8f", "#6aa6dc", "#8e82c6", "#c96fa8", "#ee5a4e"];
const Photos = () => (
  <>
    <circle r="28" fill="#f3f3f3" />
    {petals.map((c, i) => (
      <rect key={c} x="-7.500" y="-24" width="15" height="23" rx="7.500" fill={c} opacity=".85" transform={`rotate(${i * 45})`} />
    ))}
    <circle r="2" fill="#fff" />
  </>
);

const PagesDoc = () => (
  <>
    <g transform="rotate(-8)">
      <rect x="-21" y="-26" width="42" height="52" fill="#fafafa" />
      <path fill="#f98f24" d="M-21-26h42v11h-42z" />
      <text x="-19" y="-17.500" fontSize="7.500" fill="#ffe2c0" fontFamily="Inter, sans-serif">PAGES</text>
      <rect x="-17" y="-12" width="20" height="15" fill="#27a1ec" />
      <path fill="#ef7d1d" d="M-12-9h10L-7 0z" />
      <path stroke="#b5b5b5" strokeWidth="1" d="M5-11h13M5-8h13M5-5h13M5-2h13M-17 6h34M-17 9h34M-17 12h28M-17 17h34M-17 20h34M-17 23h24" />
    </g>
    <path stroke="#f6a23a" strokeWidth="5" strokeLinecap="round" d="M23-26L12 12" />
    <path stroke="#3c3f44" strokeWidth="4.500" d="M12 10L8 21" />
    <path fill="#b9bcc0" d="M5.500 20l4 1-5 7z" />
  </>
);

const Numbers = () => (
  <>
    <path fill="#f2f2f2" d="M-27 4h53l2 22h-56z" />
    <rect x="-20" y="0" width="10" height="21" fill="#e23a52" />
    <rect x="-9" y="-11" width="10" height="32" fill="#f28a2b" />
    <rect x="3" y="-26" width="9.500" height="47" fill="#35c95a" />
    <rect x="14" y="-17" width="9.500" height="38" fill="#2f98f3" />
    <path fill="#f7a5ad" d="M-20 0h10v2h-10z" />
    <path fill="#fbc888" d="M-9-11H1v3H-9z" />
    <path fill="#8ff0a4" d="M3-26h9.500v2H3z" />
    <path stroke="#777" strokeWidth="2" strokeDasharray="2 3" d="M-24 6v18" />
  </>
);

const Keynote = () => (
  <>
    <path fill="#1f9ce8" d="M-20-27h40l5 20h-50z" />
    <path fill="#66cdf7" d="M-25-7h50v2.500h-50z" />
    <path fill="#f6f6f6" d="M-15-24h30l2 14h-34z" />
    <circle cx="-7" cy="-16" r="5" fill="#41c960" />
    <path fill="#ef4a87" d="M-7-16v-5a5 5 0 0 1 5 5z" />
    <path fill="#3c9cf2" d="M-7-16h-5a5 5 0 0 1 5-5z" />
    <path stroke="#b5bac0" strokeWidth="1" d="M2-20h10M2-17h10M2-14h10" />
    <path stroke="#9fa6ad" strokeWidth="3" d="M0-4v28" />
    <ellipse cy="25" rx="12" ry="4.500" fill="#c9d6df" />
  </>
);

const Music = () => (
  <>
    <defs><linearGradient id="muA" gradientUnits="userSpaceOnUse" x1="8" y1="-16" x2="-6" y2="18"><stop offset="0" stopColor="#f5475b" /><stop offset=".5" stopColor="#d06ec8" /><stop offset="1" stopColor="#6f7cf6" /></linearGradient></defs>
    <circle r="27.500" fill="#eef0f2" stroke="#d3d6da" />
    <path fill="url(#muA)" d="M-7-14L13-18V7c0 4-3 6-6 6s-4-2-4-4c0-3 2-5 6-5V-9l-13 3v18c0 4-3 5-6 5s-5-2-5-5c0-4 4-5 8-5z" />
  </>
);

const Podcasts = () => (
  <>
    <defs><linearGradient id="pcA" x1="0" y1="0" x2="0" y2="1"><stop offset="0" stopColor="#cf6ff5" /><stop offset="1" stopColor="#7d28bb" /></linearGradient></defs>
    <circle r="27.500" fill="url(#pcA)" stroke="#5d1a92" />
    <circle cy="-2" r="4.300" fill="#fff" />
    <path fill="#fff" d="M-4 8c0-4 8-4 8 0L2.500 19c-.4 2-4.600 2-5 0z" />
    <path fill="none" stroke="#fff" strokeWidth="2.400" d="M-7 8a11 11 0 1 1 14 0M-9.500 13a17 17 0 1 1 19 0" />
  </>
);

const AppleTV = () => (
  <>
    <defs><linearGradient id="tvA" x1="0" y1="0" x2="0" y2="1"><stop offset="0" stopColor="#333" /><stop offset=".6" stopColor="#060606" /><stop offset="1" stopColor="#000" /></linearGradient></defs>
    <circle r="27" fill="url(#tvA)" stroke="#1d1d1f" />
    <FaApple x="-20" y="-11.500" width="20" height="20" color="#fff" />
    <text x="-2.500" y="8" fontSize="21.500" fontWeight="500" letterSpacing="-.5" fill="#fff" fontFamily="Inter, sans-serif">tv</text>
  </>
);

const News = () => (
  <>
    <circle r="27.500" fill="#eff1f3" stroke="#cfd3d7" />
    <path fill="#f9435c" d="M-15-14h7L15 14v1H6L-15-8zM1-14h14V3zM-15-1L-1 15h-14z" />
  </>
);

const Books = () => (
  <>
    <defs><linearGradient id="bkA" x1="0" y1="0" x2="0" y2="1"><stop offset="0" stopColor="#fdb733" /><stop offset="1" stopColor="#e2521c" /></linearGradient></defs>
    <circle r="27.500" fill="url(#bkA)" />
    <path fill="#f4f1ee" d="M-1-10C-5-14-12-14-17-11V12c6-2 12-2 16 2zM1-10C5-14 12-14 17-11V12C11 10 5 10 1 14z" />
  </>
);

const AppStore = () => (
  <>
    <defs><linearGradient id="asA" x1="0" y1="0" x2="0" y2="1"><stop offset="0" stopColor="#29bdf9" /><stop offset="1" stopColor="#1953e8" /></linearGradient></defs>
    <circle r="27.500" fill="url(#asA)" />
    <path stroke="#f2f2f2" strokeWidth="4.500" strokeLinecap="round" d="M2-15L-8 4M-2-15L14 12M-15 4.500H2M11 4.500h4M-11.500 9.500l-1.500 2.500" />
    <Badge x={22} n="1" />
  </>
);

const TextEdit = () => (
  <>
    <g transform="rotate(-7)">
      <rect x="-21" y="-26" width="42" height="52" fill="#fafafa" />
      <path stroke="#c9cdd2" strokeWidth="1" d="M-21-20h42M-21-15h42M-21-10h42M-21-5h42M-21 0h42M-21 5h42M-21 10h42M-21 15h42M-21 20h42" />
      <path stroke="#f0a9a9" strokeWidth=".8" d="M-15-26v52" />
    </g>
    <path stroke="#8494a4" strokeWidth="4" strokeLinecap="round" d="M22-26L8 18" />
    <path stroke="#cbd8e2" strokeWidth="1.300" d="M21-24L8 16" />
    <path fill="#555" d="M6 17l4 1-5 9z" />
  </>
);

const Zoom = () => (
  <>
    <defs><linearGradient id="zmA" x1="0" y1="0" x2="0" y2="1"><stop offset="0" stopColor="#4f97fd" /><stop offset="1" stopColor="#2d69f0" /></linearGradient></defs>
    <rect x="-28" y="-28" width="56" height="56" rx="16" fill="url(#zmA)" />
    <path fill="#fff" d="M-17-9H2a5 5 0 0 1 5 5V10h-19a5 5 0 0 1-5-5zM9-3l9-6v19L9 4z" />
  </>
);

const Settings = () => (
  <>
    <defs><linearGradient id="stA" x1="0" y1="0" x2="0" y2="1"><stop offset="0" stopColor="#c9d6dc" /><stop offset="1" stopColor="#7e8082" /></linearGradient></defs>
    <rect x="-28" y="-26" width="56" height="52" rx="3" fill="url(#stA)" />
    <circle r="23" fill="#2b2c2e" />
    <circle r="19.500" fill="none" stroke="#b0b1b3" strokeWidth="4" strokeDasharray="2.300 1.780" />
    <circle r="16" fill="none" stroke="#a9abad" strokeWidth="4" />
    <path stroke="#a9abad" strokeWidth="3" d="M0 0L-7-13M0 0L-7 13M0 0h14" />
    <circle r="3.500" fill="#a9abad" />
  </>
);

const Activity = () => (
  <>
    <rect x="-27" y="-24" width="54" height="48" rx="2" fill="#11201f" stroke="#85898c" strokeWidth="1.500" />
    <path stroke="#2b544d" strokeWidth="1" d="M-20-22v44M-12-22v44M-4-22v44M4-22v44M12-22v44M20-22v44M-25-16h50M-25-9h50M-25-2h50M-25 5h50M-25 12h50M-25 18h50" />
    <path fill="none" stroke="#5cc4ac" strokeWidth="1.300" d="M-23 4h9l3-3 3 3h3l2-20 3 26 2-6h3l4-6 4 7 3-1 4 0h3" />
  </>
);

const PagesWindow = () => (
  <g transform="translate(0 1)">
    <rect x="-30" y="-22" width="60" height="42" fill="#fbfbfb" />
    <path fill="#3a3a3c" d="M-30-22h60v5h-60zM15-17h15v37H15z" />
    <path stroke="#8d8d8f" strokeWidth="1.500" strokeDasharray="3 2" d="M-14-19.500h34" />
    <path stroke="#b9b9b9" strokeWidth="1" d="M0-10h8M2-7h6M-24-2h5M-24 2h30M-24 5h30M-24 8h26M-24 12h30M-24 15h20" />
    <g transform="translate(19 18) rotate(-8)">
      <rect x="-8" y="-9" width="17" height="19" fill="#fafafa" />
      <path fill="#f98f24" d="M-8-9H9v4H-8z" />
      <rect x="-6" y="-3" width="7" height="6" fill="#27a1ec" />
      <path stroke="#ef8e25" strokeWidth="2" d="M9-9L5 7" />
    </g>
  </g>
);

const TerminalWindow = () => (
  <>
    <rect x="-31" y="-19" width="62" height="38" rx="1.500" fill="#141414" stroke="#c8ccd0" strokeWidth="1.500" />
    <g stroke="#555" strokeWidth="1">
      <path strokeDasharray="2 1" d="M-28-15h14M-28-12h9M-28-9h14M-28-6h9M-28-3h14M-28 0h9M-28 3h14M-28 6h9M-28 9h14M-28 12h9M-28 15h20" />
      <path strokeDasharray="5 3" d="M-8-14h36M-8-10h36M-8-6h36M-8-2h36M-8 2h36M-8 6h36M-8 10h36" />
    </g>
  </>
);

const Trash = () => (
  <>
    <defs><linearGradient id="trA" x1="0" y1="0" x2="1" y2="0"><stop offset="0" stopColor="#6f7577" /><stop offset=".45" stopColor="#94999b" /><stop offset="1" stopColor="#54595c" /></linearGradient></defs>
    <path fill="#efefef" d="M-19-22l5-6 6 3 5-5 7 4 6-3 8 6-2 8h-33z" />
    <path fill="#3ea7dc" d="M-6-25l5 2-3 5zM9-22l4 2-5 2z" />
    <path fill="#d43d33" d="M3-26l5 3-5 4z" />
    <path fill="#333" d="M-14-24l4 4-4 2zM12-25l4 3-5 1z" />
    <path fill="url(#trA)" opacity=".95" d="M-22-22c6 6 38 6 44 0l-4 44c-2 7-34 7-36 0z" />
    <path fill="none" stroke="#cdd3d5" strokeWidth="1.500" d="M-22-22c6 6 38 6 44 0" />
  </>
);

const apps: [string, () => React.ReactElement, boolean?][] = [
  ["finder", Finder, true],
  ["siri", Siri],
  ["launchpad", Launchpad],
  ["safari", Safari, true],
  ["chrome", Chrome, true],
  ["code", VSCode, true],
  ["terminal", Terminal, true],
  ["slack", Slack],
  ["xcode", Xcode],
  ["postman", Postman],
  ["mail", Mail],
  ["contacts", Contacts],
  ["calendar", Calendar],
  ["notes", Notes],
  ["maps", Maps],
  ["messages", Messages],
  ["imovie", IMovie],
  ["facetime", FaceTime],
  ["photos", Photos],
  ["pages", PagesDoc, true],
  ["numbers", Numbers],
  ["keynote", Keynote],
  ["music", Music],
  ["podcasts", Podcasts],
  ["tv", AppleTV],
  ["news", News],
  ["books", Books],
  ["appstore", AppStore],
  ["textedit", TextEdit],
];

function DockCell({ icon: Icon, running }: { icon: () => React.ReactElement; running?: boolean }) {
  return (
    <div className="flex w-[68.230px] shrink-0 flex-col items-center">
      <svg viewBox="-34 -34 68 68" className="size-[68px] overflow-visible">
        <Icon />
      </svg>
      {running && <div className="size-2 rounded-full bg-[#9b9ba9]" />}
    </div>
  );
}

function Dock() {
  return (
    <div className="flex h-[90px] shrink-0 justify-start bg-linear-to-r from-[#0a0d1a] to-[#2c1d20] pt-1 pl-[50px]">
      <div className="flex h-[86px] w-[2460px] shrink-0 rounded-t-[10px] border-x-2 border-t-2 border-[#45454e] bg-linear-to-r from-[#171925] via-[#191a23] via-50% to-[#2d1f25] pt-1 pl-[3px]">
        {apps.map(([id, icon, running]) => (
          <DockCell key={id} icon={icon} running={running} />
        ))}
        <div className="mt-[6px] ml-[14px] h-[62px] w-[2px] shrink-0 bg-[#5c565d]" />
        <div className="ml-[14px] flex">
          <DockCell icon={Zoom} />
          <DockCell icon={Settings} />
          <DockCell icon={Activity} />
        </div>
        <div className="mt-[6px] ml-[16px] h-[62px] w-[2px] shrink-0 bg-[#5c565d]" />
        <div className="ml-[14px] flex">
          <DockCell icon={PagesWindow} />
          <DockCell icon={TerminalWindow} />
          <DockCell icon={Trash} />
        </div>
      </div>
    </div>
  );
}

export default function App() {
  return (
    <div className="flex h-[1600px] w-[2560px] flex-col overflow-hidden bg-[#3c3e58] font-[Inter,sans-serif]">
      <MenuBar />
      <div className="flex h-[1465px] shrink-0 flex-col bg-linear-to-r from-[#0a0d1a] to-[#2c1d20]">
        <div className="flex h-[223px] w-[2558px] shrink-0 flex-col overflow-hidden rounded-t-[12px] border-t border-black bg-[#202124]">
          <div className="flex h-[222px] flex-col overflow-hidden rounded-t-[12px] border-x-2 border-t-2 border-[#66676a]">
            <TabStrip />
            <Toolbar />
            <BookmarksBar />
          </div>
        </div>
        <div className="w-[2558px]">
          <QuizPage />
        </div>
      </div>
      <Dock />
    </div>
  );
}
